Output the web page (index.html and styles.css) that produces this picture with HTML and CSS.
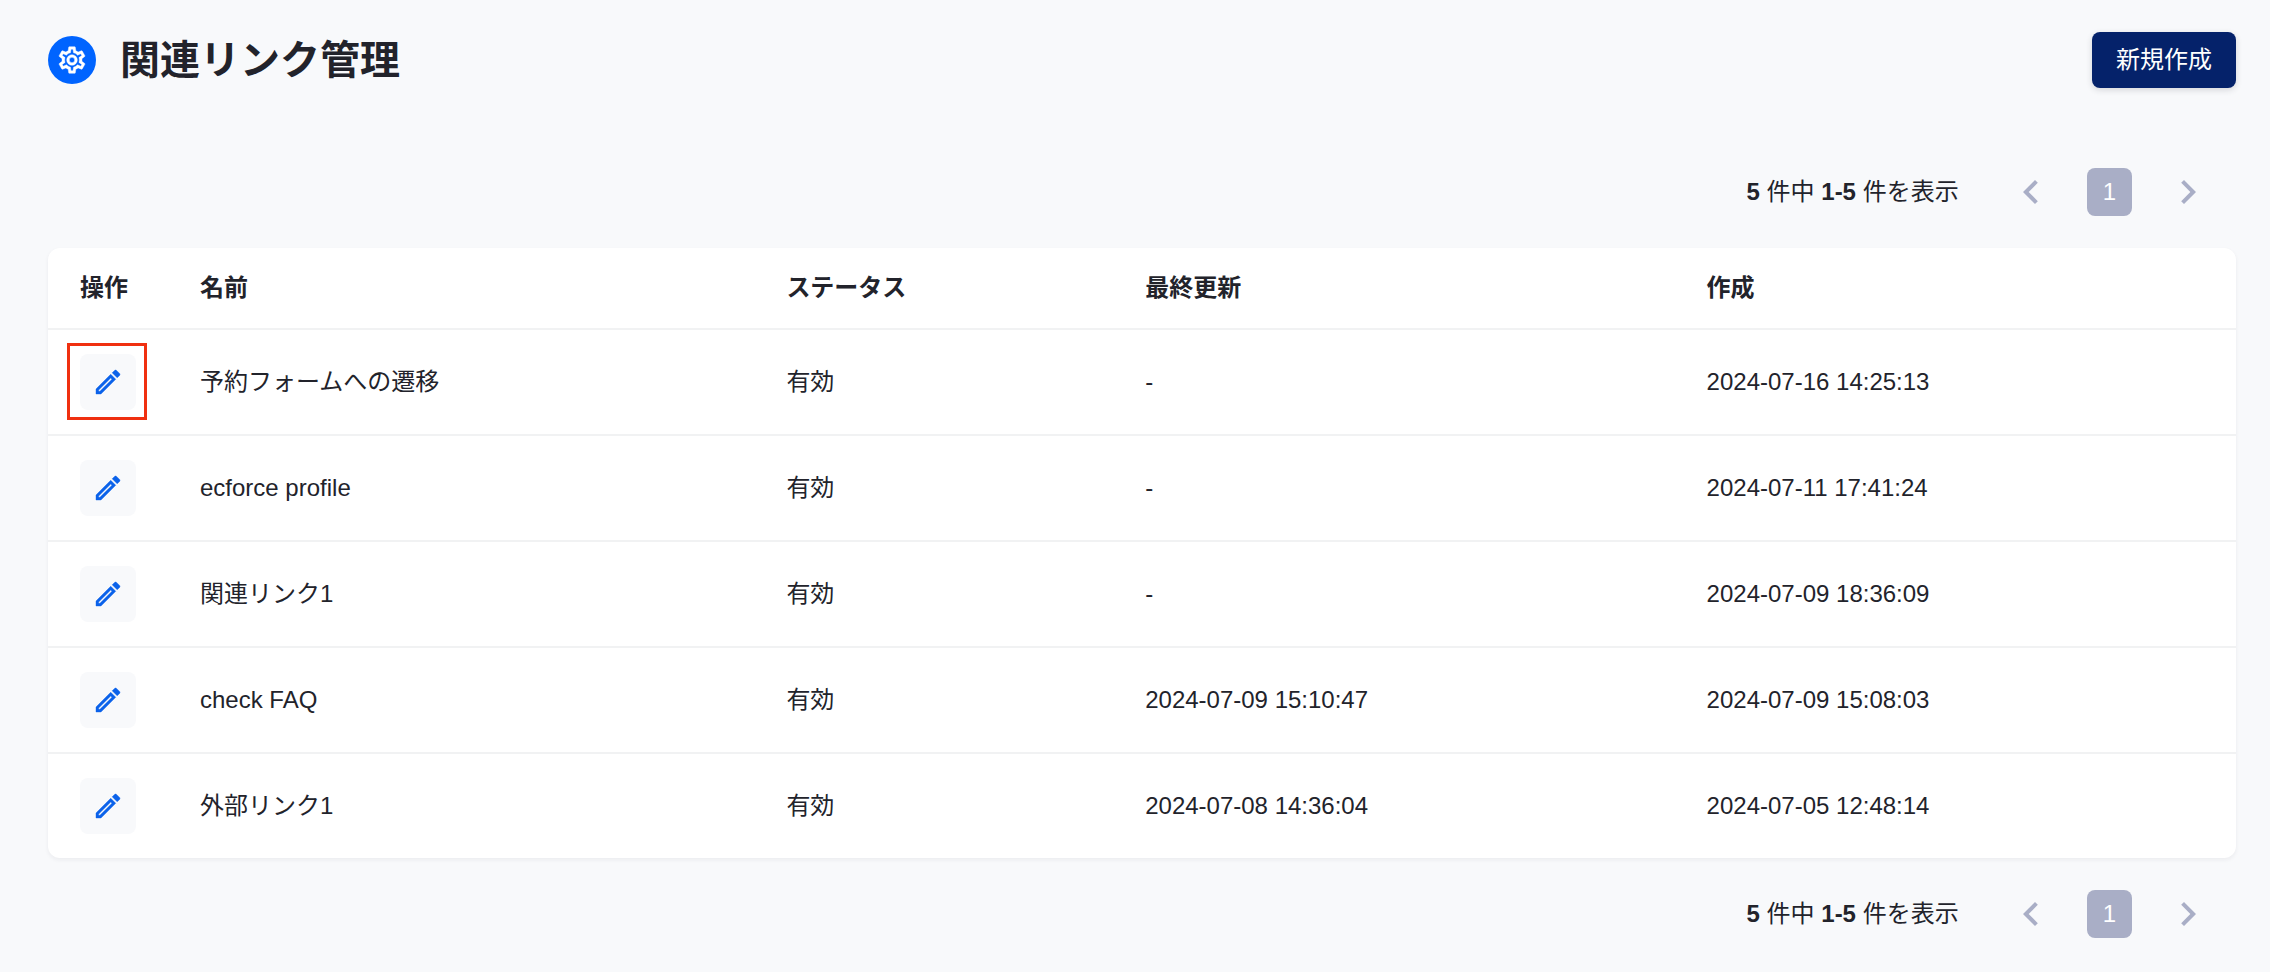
FILE: index.html
```html
<!DOCTYPE html>
<html lang="ja">
<head>
<meta charset="utf-8">
<title>関連リンク管理</title>
<link rel="stylesheet" href="styles.css">
</head>
<body>
<svg class="sprite" aria-hidden="true">
  <symbol id="cog" viewBox="0 0 24 24"><path d="M12,8A4,4 0 0,1 16,12A4,4 0 0,1 12,16A4,4 0 0,1 8,12A4,4 0 0,1 12,8M12,10A2,2 0 0,0 10,12A2,2 0 0,0 12,14A2,2 0 0,0 14,12A2,2 0 0,0 12,10M10,22C9.75,22 9.54,21.82 9.5,21.58L9.13,18.93C8.5,18.68 7.96,18.34 7.44,17.94L4.95,18.95C4.73,19.03 4.46,18.95 4.34,18.73L2.34,15.27C2.21,15.05 2.27,14.78 2.46,14.63L4.57,12.97L4.5,12L4.57,11L2.46,9.37C2.27,9.22 2.21,8.95 2.34,8.73L4.34,5.27C4.46,5.05 4.73,4.96 4.95,5.05L7.44,6.05C7.96,5.66 8.5,5.32 9.13,5.07L9.5,2.42C9.54,2.18 9.75,2 10,2H14C14.25,2 14.46,2.18 14.5,2.42L14.87,5.07C15.5,5.32 16.04,5.66 16.56,6.05L19.05,5.05C19.27,4.96 19.54,5.05 19.66,5.27L21.66,8.73C21.79,8.95 21.73,9.22 21.54,9.37L19.43,11L19.5,12L19.43,13L21.54,14.63C21.73,14.78 21.79,15.05 21.66,15.27L19.66,18.73C19.54,18.95 19.27,19.04 19.05,18.95L16.56,17.95C16.04,18.34 15.5,18.68 14.87,18.93L14.5,21.58C14.46,21.82 14.25,22 14,22H10M11.25,4L10.88,6.61C9.68,6.86 8.62,7.5 7.85,8.39L5.44,7.35L4.69,8.65L6.8,10.2C6.4,11.37 6.4,12.64 6.8,13.8L4.68,15.36L5.43,16.66L7.86,15.62C8.63,16.5 9.68,17.14 10.87,17.38L11.24,20H12.76L13.13,17.39C14.32,17.14 15.37,16.5 16.14,15.62L18.57,16.66L19.32,15.36L17.2,13.81C17.6,12.64 17.6,11.37 17.2,10.2L19.31,8.65L18.56,7.35L16.15,8.39C15.38,7.5 14.32,6.86 13.12,6.62L12.75,4H11.25Z"/></symbol>
  <symbol id="pencil" viewBox="0 0 24 24"><path d="M14.06,9L15,9.94L5.92,19H5V18.08L14.06,9M17.66,3C17.41,3 17.15,3.1 16.96,3.29L15.13,5.12L18.88,8.87L20.71,7.04C21.1,6.65 21.1,6 20.71,5.63L18.37,3.29C18.17,3.09 17.92,3 17.66,3M14.06,6.19L3,17.25V21H6.75L17.81,9.94L14.06,6.19Z"/></symbol>
  <symbol id="prev" viewBox="0 0 24 24"><path d="M15.41,16.58L10.83,12L15.41,7.41L14,6L8,12L14,18L15.41,16.58Z"/></symbol>
  <symbol id="next" viewBox="0 0 24 24"><path d="M8.59,16.58L13.17,12L8.59,7.41L10,6L16,12L10,18L8.59,16.58Z"/></symbol>
</svg>
<main class="page">
  <header class="page-header">
    <span class="badge"><svg class="icon"><use href="#cog"/></svg></span>
    <h1 class="title">関連リンク管理</h1>
    <button class="create" type="button">新規作成</button>
  </header>

  <nav class="pager" aria-label="ページ送り（上）">
    <p class="count"><b>5</b> 件中 <b>1-5</b> 件を表示</p>
    <button class="arrow" type="button" aria-label="前へ"><svg class="chevron"><use href="#prev"/></svg></button>
    <button class="current" type="button" aria-current="page">1</button>
    <button class="arrow" type="button" aria-label="次へ"><svg class="chevron"><use href="#next"/></svg></button>
  </nav>

  <div class="card">
    <table class="links">
      <colgroup><col class="c-action"><col class="c-name"><col class="c-status"><col class="c-date"><col class="c-date"></colgroup>
      <thead>
        <tr><th scope="col">操作</th><th scope="col">名前</th><th scope="col">ステータス</th><th scope="col">最終更新</th><th scope="col">作成</th></tr>
      </thead>
      <tbody>
        <tr><td><button class="edit marked" type="button" aria-label="編集"><svg class="icon"><use href="#pencil"/></svg></button></td><td>予約フォームへの遷移</td><td>有効</td><td>-</td><td>2024-07-16 14:25:13</td></tr>
        <tr><td><button class="edit" type="button" aria-label="編集"><svg class="icon"><use href="#pencil"/></svg></button></td><td>ecforce profile</td><td>有効</td><td>-</td><td>2024-07-11 17:41:24</td></tr>
        <tr><td><button class="edit" type="button" aria-label="編集"><svg class="icon"><use href="#pencil"/></svg></button></td><td>関連リンク1</td><td>有効</td><td>-</td><td>2024-07-09 18:36:09</td></tr>
        <tr><td><button class="edit" type="button" aria-label="編集"><svg class="icon"><use href="#pencil"/></svg></button></td><td>check FAQ</td><td>有効</td><td>2024-07-09 15:10:47</td><td>2024-07-09 15:08:03</td></tr>
        <tr><td><button class="edit" type="button" aria-label="編集"><svg class="icon"><use href="#pencil"/></svg></button></td><td>外部リンク1</td><td>有効</td><td>2024-07-08 14:36:04</td><td>2024-07-05 12:48:14</td></tr>
      </tbody>
    </table>
  </div>

  <nav class="pager" aria-label="ページ送り（下）">
    <p class="count"><b>5</b> 件中 <b>1-5</b> 件を表示</p>
    <button class="arrow" type="button" aria-label="前へ"><svg class="chevron"><use href="#prev"/></svg></button>
    <button class="current" type="button" aria-current="page">1</button>
    <button class="arrow" type="button" aria-label="次へ"><svg class="chevron"><use href="#next"/></svg></button>
  </nav>
</main>
</body>
</html>
```
FILE: styles.css
```css
* {
  box-sizing: border-box;
}

body {
  margin: 0;
  background: #f8f9fb;
  color: #22232b;
  font-family: "Liberation Sans", "Noto Sans CJK JP", sans-serif;
  font-size: 24px;
  line-height: 32px;
}

button {
  border: 0;
  padding: 0;
  font: inherit;
  cursor: pointer;
}

.sprite {
  display: none;
}

.page {
  padding: 32px 34px 32px 48px;
}

.page-header {
  display: flex;
  align-items: center;
  gap: 24px;
  margin-bottom: 80px;
}

.badge {
  display: flex;
  align-items: center;
  justify-content: center;
  width: 48px;
  height: 48px;
  border-radius: 50%;
  background: #0064ff;
  color: #fff;
}

.icon {
  width: 32px;
  height: 32px;
  fill: currentColor;
  stroke: currentColor;
  stroke-width: 0.3;
}

.title {
  flex: 1;
  margin: 0;
  font-size: 40px;
  line-height: 56px;
}

.create {
  height: 56px;
  padding: 0 24px;
  border-radius: 8px;
  background: #05226a;
  color: #fff;
  box-shadow: 0 2px 6px rgba(35, 36, 47, 0.16);
}

.pager {
  display: flex;
  align-items: center;
  justify-content: flex-end;
  gap: 32px;
  padding-right: 24px;
}

.count {
  margin: 0 16px 0 0;
}

.arrow {
  display: flex;
  background: none;
  color: #a9aec6;
}

.chevron {
  width: 48px;
  height: 48px;
  fill: currentColor;
}

.current {
  height: 48px;
  padding: 0 16px;
  border-radius: 8px;
  background: #a9aec6;
  color: #fff;
}

.card {
  margin: 32px 0;
  border-radius: 12px;
  background: #fff;
  box-shadow: 0 2px 4px rgba(35, 36, 47, 0.06);
}

.links {
  width: 100%;
  table-layout: fixed;
  border-collapse: separate;
  border-spacing: 0;
  text-align: left;
}

.c-action {
  width: 120px;
}

.c-name {
  width: 26.8%;
}

.c-status {
  width: 16.4%;
}

.links th {
  height: 80px;
  padding: 0 0 0 32px;
}

.links td {
  padding: 24px 0 24px 32px;
  border-top: 2px solid #f1f2f3;
}

.edit {
  position: relative;
  display: flex;
  align-items: center;
  justify-content: center;
  width: 56px;
  height: 56px;
  border-radius: 8px;
  background: #f8f9fb;
  color: #0b62ea;
}

.marked::after {
  content: "";
  position: absolute;
  inset: -11px -11px -10px -13px;
  border: 3px solid #f03010;
}
```
